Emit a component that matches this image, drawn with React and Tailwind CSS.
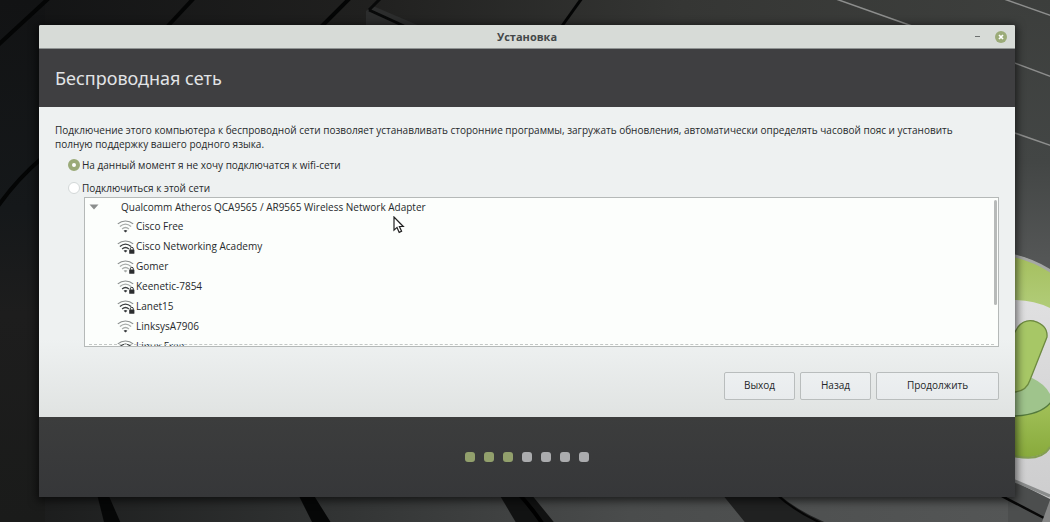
import React from "react";

const networks = [
  { name: "Cisco Free", level: 1, locked: false },
  { name: "Cisco Networking Academy", level: 3, locked: true },
  { name: "Gomer", level: 0, locked: true },
  { name: "Keenetic-7854", level: 2, locked: true },
  { name: "Lanet15", level: 3, locked: true },
  { name: "LinksysA7906", level: 1, locked: false },
  { name: "Linux Free", level: 3, locked: false },
];

const steps = [true, true, true, false, false, false, false];

function WifiIcon({ level, locked }) {
  const on = "#3a3d3f";
  const off = "#a9adab";
  return (
    <svg viewBox="0 0 18 16" className="h-4 w-[18px] shrink-0" fill="none" aria-hidden="true">
      <path d="M0.8 5.9C5.4 2 11.6 2 16.2 5.9" stroke="#8b8f8e" strokeWidth="1.2" />
      <path d="M2.9 8.5C6.3 5.6 10.7 5.6 14.1 8.5" stroke={level > 2 ? on : off} strokeWidth="1.3" />
      <path d="M5.1 11C7.2 9.1 9.8 9.1 11.9 11" stroke={level > 1 ? on : off} strokeWidth="1.3" />
      <path d="M6.6 12.7C7.8 11.9 9.2 11.9 10.4 12.7L8.5 14.4Z" fill={level > 0 ? on : off} />
      {locked && (
        <>
          <path d="M13.3 11.8V10.8a1.5 1.5 0 0 1 3 0v1" stroke="#2c2e30" strokeWidth="1" />
          <rect x="12.2" y="11.4" width="5.2" height="4.4" rx="0.5" fill="#2c2e30" />
        </>
      )}
    </svg>
  );
}

function Wallpaper() {
  return (
    <svg
      className="absolute inset-0 h-full w-full"
      viewBox="0 0 1050 522"
      preserveAspectRatio="xMidYMid slice"
      aria-hidden="true"
    >
      <defs>
        <linearGradient id="base" x1="0" x2="1" y1="0" y2="0">
          <stop offset="0" stopColor="#121314" />
          <stop offset="0.35" stopColor="#20201f" />
          <stop offset="0.65" stopColor="#353634" />
          <stop offset="1" stopColor="#3e403e" />
        </linearGradient>
        <linearGradient id="left" x1="0" x2="0" y1="0" y2="1">
          <stop offset="0" stopColor="#121314" />
          <stop offset="0.4" stopColor="#15181a" />
          <stop offset="0.6" stopColor="#1d1d1d" />
          <stop offset="1" stopColor="#1a1b1a" />
        </linearGradient>
        <linearGradient id="floor" x1="0" x2="1" y1="0" y2="0">
          <stop offset="0" stopColor="#191a1a" />
          <stop offset="0.3" stopColor="#303232" />
          <stop offset="0.6" stopColor="#4a4c4c" />
          <stop offset="1" stopColor="#555757" />
        </linearGradient>
        <linearGradient id="side" x1="0" x2="0" y1="0" y2="1">
          <stop offset="0" stopColor="#3c3e3c" />
          <stop offset="0.6" stopColor="#434645" />
          <stop offset="1" stopColor="#565858" />
        </linearGradient>
        <linearGradient id="rim" x1="0" x2="0" y1="0" y2="1">
          <stop offset="0" stopColor="#e4e4e5" />
          <stop offset="1" stopColor="#cdcdce" />
        </linearGradient>
        <linearGradient id="leaf" x1="0" x2="0" y1="0" y2="1">
          <stop offset="0" stopColor="#a5bf5e" />
          <stop offset="1" stopColor="#b1cc78" />
        </linearGradient>
        <linearGradient id="deep" x1="0" x2="0" y1="0" y2="1">
          <stop offset="0" stopColor="#a3c25a" />
          <stop offset="1" stopColor="#88aa3c" />
        </linearGradient>
      </defs>
      <rect width="1050" height="522" fill="url(#base)" />
      <rect y="490" width="1050" height="32" fill="url(#floor)" />
      <rect width="45" height="522" fill="url(#left)" />
      <rect x="1000" y="0" width="50" height="270" fill="url(#side)" />
      <g stroke="#040505" strokeWidth="4" fill="none">
        <path d="M-4 47L49 -2" />
        <path d="M166 28L194 -2" />
        <path d="M320 28L352 -4" />
        <path d="M562 26L582 -2" strokeWidth="3" />
        <path d="M-4 209Q16 180 42 158" />
      </g>
      <path d="M366 11L373 6L420 26H366Z" fill="#2c2d2d" />
      <path d="M369 10L404 26M369 10L380 -1" stroke="#080909" strokeWidth="3" fill="none" />
      <g stroke="#8d8e8d" strokeWidth="1.5" fill="none">
        <path d="M836 -1L912 26" />
        <path d="M1004 -1L1052 16" />
        <path d="M1012 62L1052 77" />
        <path d="M1012 132L1052 146" />
      </g>
      <path d="M97 494L108 494L122 526L105 526Z" fill="#060707" />
      <path d="M298 494L313 494L333 526L314 526Z" fill="#060707" />
      <path d="M499 494L531 494L557 526L518 526Z" fill="#111212" />
      <path d="M519 494Q532 508 544 526" stroke="#000000" strokeWidth="4" fill="none" />
      <path d="M722 494L778 494Q800 513 834 526L748 526Z" fill="#202121" />
      <path d="M776 494Q798 514 828 526" stroke="#060606" strokeWidth="2" fill="none" />
      <path d="M1010 254Q1030 257 1050 271V500L1010 480Z" fill="url(#rim)" />
      <path d="M1010 255Q1032 259 1050 271V308Q1032 299 1010 300Z" fill="url(#leaf)" />
      <path d="M1010 255Q1032 259 1052 272" stroke="#a5a7a5" strokeWidth="3" fill="none" />
      <path d="M1010 414Q1038 416 1050 400V448Q1040 460 1010 457Z" fill="url(#deep)" />
      <path d="M1010 455Q1041 463 1050 447" stroke="#849e54" strokeWidth="2" fill="none" />
      <path d="M1010 374L1032 378Q1045 384 1050 394V403Q1038 416 1010 416Z" fill="#9fc48c" />
      <path d="M1010 416Q1040 416 1051 402" stroke="#547a3d" strokeWidth="1.3" fill="none" />
      <path
        d="M1010 340L1018 327Q1024 319 1034 321Q1048 325 1047 337L1030 380Q1026 393 1010 392Z"
        fill="#a7c766"
        stroke="#6d8a40"
        strokeWidth="1.3"
      />
      <path d="M1008 478L1050 499V522H1008Z" fill="#4c4e4e" />
      <path d="M1008 478L1050 496" stroke="#8a8c8c" strokeWidth="3" />
      <path d="M994 492L1044 518" stroke="#080808" strokeWidth="2.5" />
      <path d="M1050 500L1042 522H1050Z" fill="#858686" />
    </svg>
  );
}

function Pointer() {
  return (
    <svg
      viewBox="0 0 12 18"
      className="pointer-events-none absolute top-[18px] left-[308px] h-[18px] w-3"
      aria-hidden="true"
    >
      <path
        d="M1 1V14.2L4 11.4L6.2 16.4L8.6 15.3L6.4 10.5H10.3Z"
        fill="#ffffff"
        stroke="#202020"
        strokeWidth="1.2"
      />
    </svg>
  );
}

const buttonClass =
  "h-7 rounded-xs border border-[#b9bdbd] bg-linear-to-b from-[#edf0f1] to-[#e8ebed] pb-0.5 text-center text-[#232628]";

const radioClass =
  "size-3 shrink-0 appearance-none rounded-full border border-[#d3d8d8] bg-white checked:border-4 checked:border-[#9aaa78]";

export default function App() {
  return (
    <div className="relative flex min-h-screen flex-col overflow-hidden bg-[#1b1c1c] py-[25px] pr-[35px] pl-[39px] font-['Open_Sans','Noto_Sans',sans-serif] text-[10px] leading-[14px] text-[#26292b]">
      <Wallpaper />
      <main className="relative flex grow flex-col rounded-t-xs bg-[#edf0ef] shadow-[0_2px_8px_2px_rgba(0,0,0,0.6)]">
        <div className="grid h-6 grid-cols-[1fr_auto_1fr] items-center rounded-t-xs border-b border-[#8f9392] bg-[#d7dbd7] px-2">
          <span />
          <h1 className="text-[11px] leading-4 font-bold text-[#444849]">Установка</h1>
          <div className="flex items-center justify-end gap-3">
            <button type="button" aria-label="Свернуть" className="flex h-3 w-3 items-center justify-center">
              <span className="h-px w-[5px] bg-[#6c706f]" />
            </button>
            <button
              type="button"
              aria-label="Закрыть"
              className="flex size-3 items-center justify-center rounded-full bg-[#9bab78]"
            >
              <svg viewBox="0 0 12 12" className="size-3" aria-hidden="true">
                <path d="M4 4L8 8M8 4L4 8" stroke="#ffffff" strokeWidth="1.7" />
              </svg>
            </button>
          </div>
        </div>

        <header className="flex h-[58px] items-center bg-[#3f3f41] px-4">
          <h2 className="font-['Noto_Sans','Open_Sans',sans-serif] text-lg leading-6 text-[#e2e4e6]">
            Беспроводная сеть
          </h2>
        </header>

        <form
          className="flex grow flex-col bg-linear-to-b from-[#eef1f1] from-75% to-[#e0e3e2] px-4 pt-4 pb-[17px]"
          onSubmit={(e) => e.preventDefault()}
        >
          <p className="pr-4">
            Подключение этого компьютера к беспроводной сети позволяет устанавливать сторонние программы, загружать
            обновления, автоматически определять часовой пояс и установить полную поддержку вашего родного языка.
          </p>
          <div className="mt-1 flex flex-col gap-1 pl-[13px]">
            <label className="flex h-[19px] items-center gap-0.5">
              <input type="radio" name="wifi" defaultChecked className={radioClass} />
              На данный момент я не хочу подключатся к wifi-сети
            </label>
            <label className="flex h-[19px] items-center gap-0.5">
              <input type="radio" name="wifi" className={radioClass} />
              Подключиться к этой сети
            </label>
          </div>
          <div className="relative ml-[29px] h-[150px] border border-[#b5b9b8] bg-[#fcfefc]">
            <div className="h-full overflow-hidden">
              <div className="flex h-[18px] items-center gap-[22px] pl-1">
                <svg viewBox="0 0 10 6" className="h-[6px] w-[10px]" aria-hidden="true">
                  <path d="M0.5 0.5H9.5L5 5.5Z" fill="#8b8e8d" />
                </svg>
                <span>Qualcomm Atheros QCA9565 / AR9565 Wireless Network Adapter</span>
              </div>
              <ul>
                {networks.map((n) => (
                  <li key={n.name} className="flex h-5 items-center gap-px pl-8">
                    <WifiIcon level={n.level} locked={n.locked} />
                    {n.name}
                  </li>
                ))}
              </ul>
            </div>
            <div className="absolute inset-x-1 bottom-px border-b border-dashed border-[#c3c7c5]" />
            <div className="absolute top-0.5 right-px h-[105px] w-[3px] rounded-full bg-[#b7bab9]" />
            <Pointer />
          </div>
          <div className="mt-auto flex justify-end gap-[5px]">
            <button type="button" className={`${buttonClass} w-[71px]`}>
              Выход
            </button>
            <button type="button" className={`${buttonClass} w-[71px]`}>
              Назад
            </button>
            <button type="submit" className={`${buttonClass} w-[123px]`}>
              Продолжить
            </button>
          </div>
        </form>

        <footer className="flex h-20 items-center justify-center gap-[9px] bg-linear-to-b from-[#3c3d3d] to-[#363739]">
          {steps.map((done, i) => (
            <span key={i} className={`size-[10px] rounded-[3px] ${done ? "bg-[#92a06c]" : "bg-[#abacae]"}`} />
          ))}
        </footer>
      </main>
    </div>
  );
}
